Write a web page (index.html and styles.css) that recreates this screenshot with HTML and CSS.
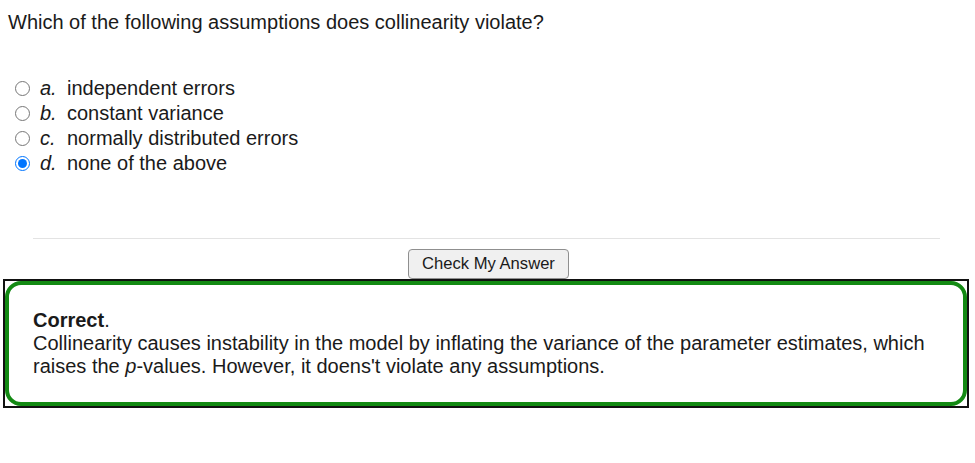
FILE: index.html
```html
<!DOCTYPE html>
<html>
<head>
<meta charset="utf-8">
<link rel="stylesheet" href="styles.css">
</head>
<body>
<div class="question">Which of the following assumptions does collinearity violate?</div>
<div class="options">
  <label class="option"><input type="radio" name="q"><span class="letter">a.</span><span>independent errors</span></label>
  <label class="option"><input type="radio" name="q"><span class="letter">b.</span><span>constant variance</span></label>
  <label class="option"><input type="radio" name="q"><span class="letter">c.</span><span>normally distributed errors</span></label>
  <label class="option"><input type="radio" name="q" checked><span class="letter">d.</span><span>none of the above</span></label>
</div>
<hr class="divider">
<div class="actions"><button class="check">Check My Answer</button></div>
<div class="feedback-outer">
  <div class="feedback">
    <p class="fb-title"><strong>Correct</strong>.</p>
    <p class="fb-body">Collinearity causes instability in the model by inflating the variance of the parameter estimates, which raises the <i class="var">p</i>-values. However, it doens't violate any assumptions.</p>
  </div>
</div>
</body>
</html>
```
FILE: styles.css
```css
html, body {
  background: #ffffff;
}
body {
  margin: 0;
  font-family: "Liberation Sans", Arial, sans-serif;
  font-size: 20px;
  color: #1a1a1a;
}
.question {
  padding: 11px 0 0 8px;
  line-height: 23px;
}
.options {
  display: flex;
  flex-direction: column;
  padding: 42px 0 0 12px;
}
.option {
  display: flex;
  align-items: center;
  height: 25px;
}
.option input {
  width: 15px;
  height: 15px;
  margin: 0 10px 0 3px;
  accent-color: #0075ff;
}
.letter {
  font-style: italic;
  width: 27px;
}
.divider {
  margin: 62px 35px 0 33px;
  border: 0;
  border-top: 1px solid #e3e3e3;
  height: 0;
}
.actions {
  display: flex;
  justify-content: center;
  padding-top: 10px;
}
.check {
  font-family: "Liberation Sans", Arial, sans-serif;
  font-size: 16.6px;
  color: #1a1a1a;
  background: #f0f0f0;
  border: 1px solid #8f8f8f;
  border-radius: 4px;
  height: 30px;
  padding: 0 13px;
  margin-left: 2px;
}
.feedback-outer {
  margin: 0 6px 0 3px;
  border: 2px solid #111;
}
.feedback {
  border: 4px solid #138a13;
  border-radius: 16px;
  padding: 24px 24px 24px 24px;
  line-height: 23px;
}
.fb-title, .fb-body {
  margin: 0;
}
.var {
  font-style: italic;
}
```
